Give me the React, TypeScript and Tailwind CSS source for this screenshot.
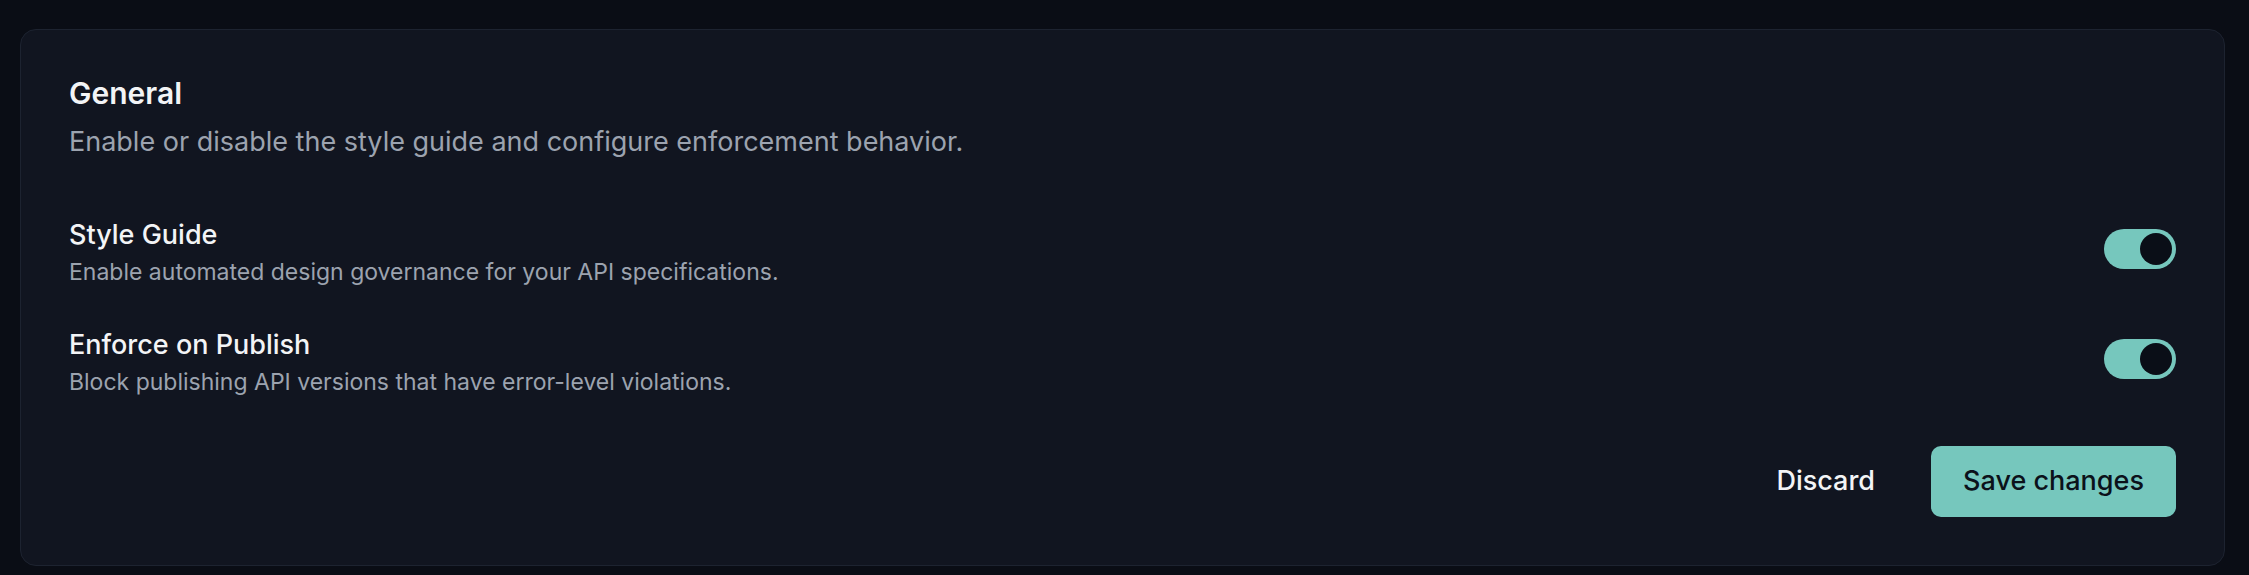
import React, { useState } from "react";

type Setting = {
    id: string;
    title: string;
    description: string;
};

const settings: Setting[] = [
    {
        id: "style-guide",
        title: "Style Guide",
        description: "Enable automated design governance for your API specifications.",
    },
    {
        id: "enforce",
        title: "Enforce on Publish",
        description: "Block publishing API versions that have error-level violations.",
    },
];

function Toggle({ on, onChange }: { on: boolean; onChange: () => void }) {
    return (
        <button
            type="button"
            role="switch"
            aria-checked={on}
            onClick={onChange}
            className={`mt-[12px] flex h-[40px] w-[72px] shrink-0 items-center rounded-full p-[4px] transition-colors ${
                on ? "justify-end bg-[#76c7bd]" : "justify-start bg-[#2a3140]"
            }`}
        >
            <span className="block h-[32px] w-[32px] rounded-full bg-[#0a0e17]" />
        </button>
    );
}

export default function App() {
    const [values, setValues] = useState<Record<string, boolean>>({
        "style-guide": true,
        enforce: true,
    });

    return (
        <div
            className="min-h-screen bg-[#0a0d15] pl-5 pr-6 pt-[29px]"
            style={{ fontFamily: "Inter, 'Noto Sans', sans-serif" }}
        >
            <section className="rounded-2xl border border-[#1d2330] bg-[#111520] p-12">
                <h2 className="text-[30px] font-semibold leading-[30px] text-[#f3f4f6]">General</h2>
                <p className="mt-[16px] text-[27px] leading-[36px] text-[#9ca3af]">
                    Enable or disable the style guide and configure enforcement behavior.
                </p>

                <div className="mt-[57px] flex flex-col gap-[37px]">
                    {settings.map((s) => (
                        <div key={s.id} className="flex items-start justify-between">
                            <div>
                                <div className="text-[27px] font-medium leading-[36px] text-[#f3f4f6]">{s.title}</div>
                                <div className="mt-px text-[23px] leading-[36px] text-[#9ca3af]">{s.description}</div>
                            </div>
                            <Toggle
                                on={values[s.id]}
                                onChange={() => setValues((v) => ({ ...v, [s.id]: !v[s.id] }))}
                            />
                        </div>
                    ))}
                </div>

                <div className="mt-[46px] flex items-center justify-end gap-6">
                    <button type="button" className="h-[71px] px-8 text-[27px] font-medium text-[#f3f4f6]">
                        Discard
                    </button>
                    <button
                        type="button"
                        className="h-[71px] rounded-[10px] bg-[#76c7bd] px-8 text-[27px] font-medium text-[#0b111a]"
                    >
                        Save changes
                    </button>
                </div>
            </section>
        </div>
    );
}
